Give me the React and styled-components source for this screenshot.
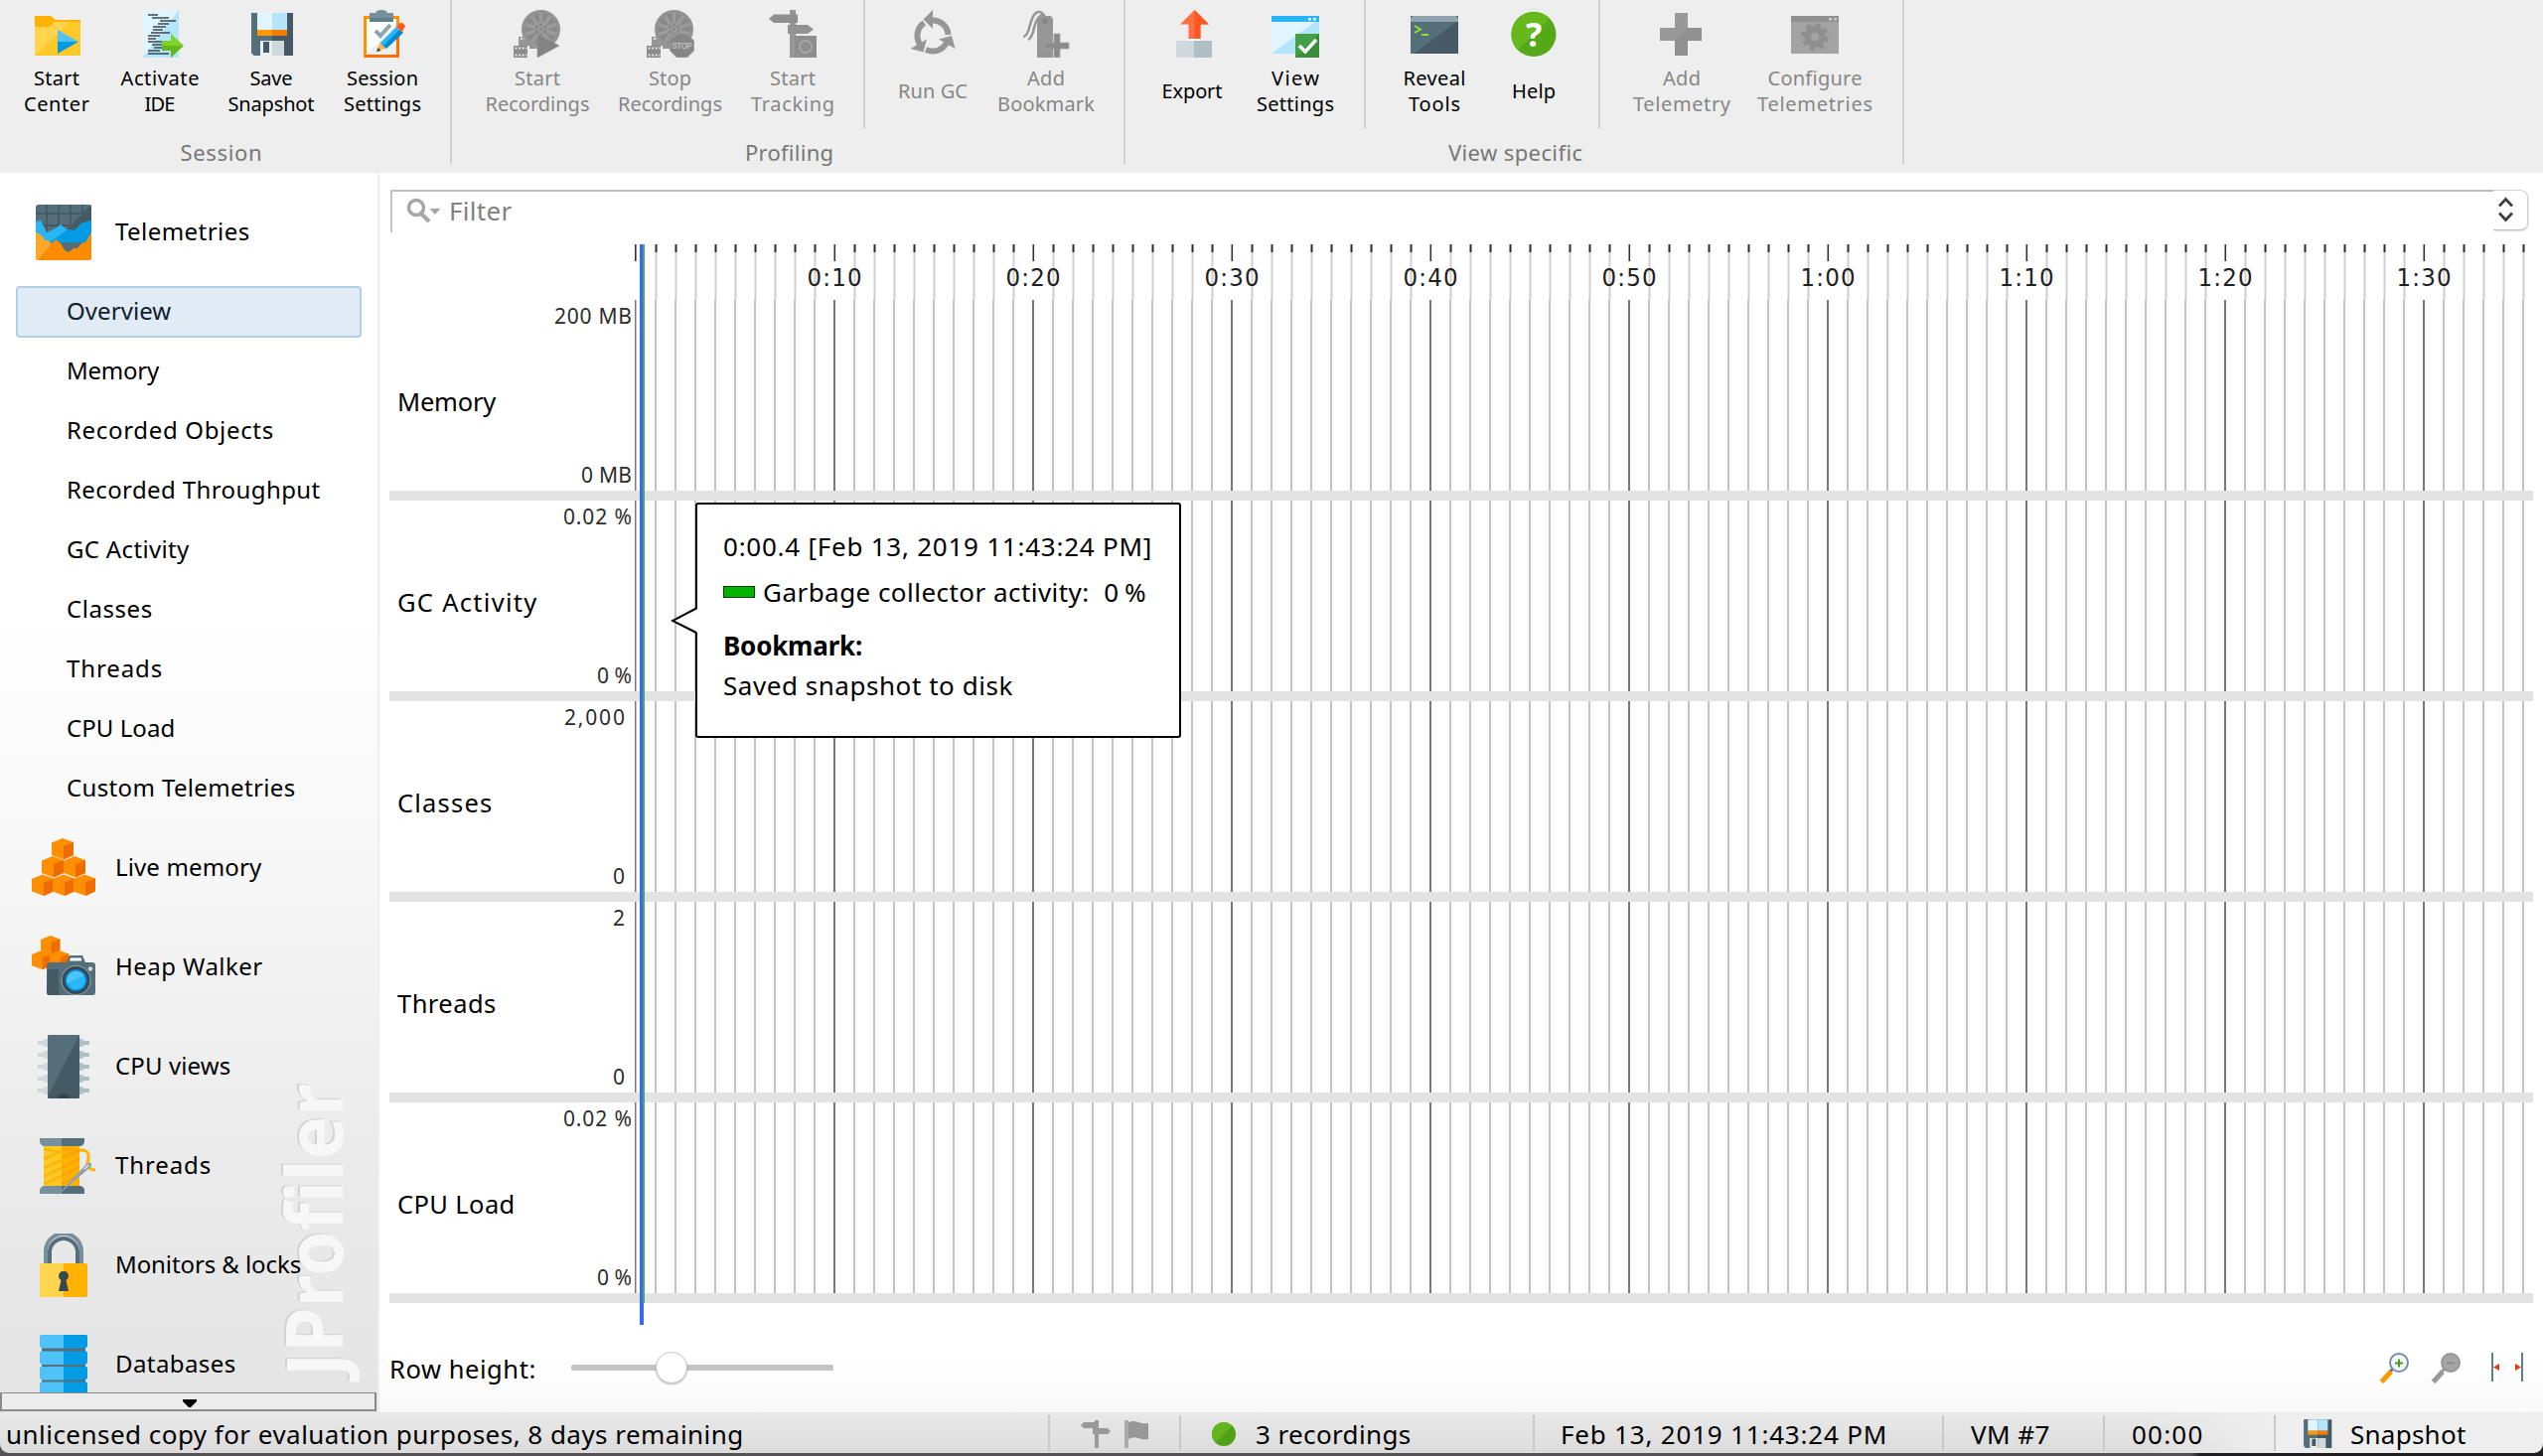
import React, { useLayoutEffect, useRef } from "react";
import styled, { createGlobalStyle } from "styled-components";

const Global = createGlobalStyle`
  * { box-sizing: border-box; }
  body { margin: 0; background: #fff; font-family: "Noto Sans", "Open Sans", sans-serif; color: #000; overflow: hidden; }
  svg { display: block; flex: none; }
`;

/* ---------- tracked text ---------- */
const TextSpan = styled.span`
  display: inline-block;
  white-space: pre;
  flex: none;
`;

/* Tunes letter spacing so that the text takes the given ink width. */
function T({ w, children }) {
  const ref = useRef(null);
  useLayoutEffect(() => {
    const el = ref.current;
    el.style.letterSpacing = "0px";
    el.style.marginRight = "0px";
    if (!w || children.length < 2) return;
    const size = parseFloat(getComputedStyle(el).fontSize);
    const natural = el.getBoundingClientRect().width;
    const ls = (w + size * 0.05 - natural) / (children.length - 1);
    el.style.letterSpacing = `${ls}px`;
    el.style.marginRight = `${-ls}px`;
  }, [w, children]);
  return <TextSpan ref={ref}>{children}</TextSpan>;
}

/* ---------- frame ---------- */
const Window = styled.div`
  width: 2560px;
  height: 1466px;
  display: flex;
  flex-direction: column;
  background: linear-gradient(90deg, #545254 2205px, #1f1f21 2215px);
`;
const Body = styled.div`
  height: 1248px;
  display: flex;
  background: #fff;
`;

/* ---------- toolbar ---------- */
const Toolbar = styled.div`
  height: 174px;
  flex: none;
  display: flex;
  background: #eee;
`;
const Section = styled.div`
  height: 165px;
  width: ${(p) => p.$w}px;
  border-right: 2px solid #d2d2d2;
  display: flex;
  flex-direction: column;
`;
const ToolRow = styled.div`
  height: 130px;
  display: flex;
`;
const ToolSet = styled.div`
  height: 130px;
  display: flex;
  padding-left: ${(p) => p.$l}px;
  padding-right: ${(p) => p.$r || 0}px;
  border-right: ${(p) => (p.$line ? "2px solid #d2d2d2" : "none")};
`;
const Tool = styled.div`
  width: ${(p) => p.$w}px;
  padding-top: 10px;
  display: flex;
  flex-direction: column;
  align-items: center;
  gap: 8px;
  color: ${(p) => (p.$off ? "#868686" : "#000")};
`;
const ToolLabel = styled.div`
  height: 52px;
  display: flex;
  flex-direction: column;
  align-items: center;
  justify-content: center;
  font-size: 20px;
  line-height: 26px;
`;
const Caption = styled.div`
  height: 35px;
  padding: 8px ${(p) => p.$r || 0}px 0 ${(p) => p.$l || 0}px;
  text-align: center;
  font-size: 22px;
  line-height: 30px;
  color: #777;
`;

/* ---------- sidebar ---------- */
const Sidebar = styled.div`
  position: relative;
  width: 382px;
  flex: none;
  height: 1248px;
  border-right: 2px solid #eee;
  background: linear-gradient(180deg, #fff 0, #fff 440px, #f7f7f7 700px, #ebebeb 980px, #e5e5e5 1228px);
  display: flex;
  flex-direction: column;
`;
const NavList = styled.div`
  position: relative;
  height: 1228px;
  flex: none;
  padding-top: 10px;
  overflow: hidden;
  display: flex;
  flex-direction: column;
`;
const Watermark = styled.svg`
  position: absolute;
  right: 0;
  bottom: 0;
`;
const NavGroup = styled.div`
  position: relative;
  height: 100px;
  flex: none;
  display: flex;
  align-items: center;
  gap: 20px;
  padding-left: 32px;
  font-size: 24px;
  line-height: 32px;
`;
const NavText = styled.div`
  padding-bottom: 3px;
`;
const NavItem = styled.div`
  height: 52px;
  flex: none;
  margin: 4px 16px;
  padding: 0 0 3px ${(p) => (p.$on ? 49 : 51)}px;
  display: flex;
  align-items: center;
  font-size: 24px;
  color: ${(p) => (p.$on ? "#10202e" : "#000")};
  background: ${(p) => (p.$on ? "#e1ebf5" : "transparent")};
  border: ${(p) => (p.$on ? "2px solid #b0cfe6" : "none")};
  border-radius: 4px;
`;
const ScrollDown = styled.div`
  height: 19px;
  width: 379px;
  border: 2px solid #8a8a8a;
  border-top-width: 1px;
  background: #ececec;
  display: flex;
  align-items: center;
  justify-content: center;
  padding: 3px 0 0 2px;
`;

/* ---------- main ---------- */
const Main = styled.div`
  flex: 1;
  height: 1248px;
  padding: 17px 10px 0 10px;
  display: flex;
  flex-direction: column;
  background: linear-gradient(180deg, #fff 0, #fff 1190px, #f9f9f9 1248px);
`;
const FilterBar = styled.div`
  height: 43px;
  margin: 0 5px 0 1px;
  display: flex;
  align-items: flex-start;
  justify-content: space-between;
  border-left: 2px solid #c3c3c3;
`;
const FilterField = styled.div`
  flex: 1;
  height: 43px;
  border-top: 2px solid #bdbdbd;
  display: flex;
  align-items: center;
  gap: 8px;
  padding: 0 0 4px 14px;
  font-size: 26px;
  color: #808080;
`;
const Stepper = styled.div`
  width: 35px;
  height: 41px;
  border: 1px solid #d4d4d4;
  border-left: none;
  border-bottom-color: #bbb;
  border-radius: 0 8px 8px 0;
  box-shadow: 1px 1px 1px rgba(0, 0, 0, 0.12);
  display: flex;
  align-items: center;
  padding: 0 0 2px 4px;
`;
const Chart = styled.div`
  position: relative;
  margin-top: 12px;
  display: flex;
  flex-direction: column;
`;
const RulerRow = styled.div`
  height: 56px;
  padding-left: 247px;
`;
const TelemetryRow = styled.div`
  height: 202px;
  display: flex;
  border-bottom: 10px solid #e3e3e3;
`;
const RowHead = styled.div`
  width: 247px;
  display: flex;
  justify-content: space-between;
  align-items: center;
  padding: 0 3px 0 8px;
`;
const RowName = styled.div`
  font-size: 25.5px;
  padding-top: 11px;
`;
const Scale = styled.div`
  height: 192px;
  display: flex;
  flex-direction: column;
  justify-content: space-between;
  align-items: flex-end;
  padding: 1px ${(p) => (p.$unit ? 0 : 7)}px 1px 0;
  font-size: 21px;
  line-height: 30px;
  color: #2c2c2c;
`;
const Cursor = styled.div`
  position: absolute;
  left: 252px;
  top: 0;
  width: 4px;
  height: 1088px;
  background: #3568fb;
`;
const CursorEdge = styled.div`
  position: absolute;
  left: 255px;
  top: 0;
  width: 2px;
  height: 1066px;
  background: #4fa660;
`;
const Tooltip = styled.div`
  position: absolute;
  left: 308px;
  top: 260px;
  width: 489px;
  height: 237px;
  border: 2px solid #000;
  border-radius: 3px;
  background: #fff;
  padding: 23px 0 0 26px;
  font-size: 26px;
  line-height: 38px;
`;
const Pointer = styled.svg`
  position: absolute;
  left: -27px;
  top: 103px;
`;
const TipLine = styled.div`
  height: 38px;
  margin-top: ${(p) => p.$mt || 0}px;
  display: flex;
  align-items: center;
  font-weight: ${(p) => (p.$bold ? 700 : 400)};
`;
const Swatch = styled.div`
  width: 32px;
  height: 12px;
  margin: 0 8px 0 0;
  background: #00b400;
  border: 1px solid #003c00;
`;
const TipValue = styled.div`
  margin-left: 15px;
`;
const Footer = styled.div`
  height: 66px;
  margin-top: 32px;
  padding-right: 10px;
  display: flex;
  align-items: center;
  font-size: 25.5px;
`;
const FooterLabel = styled.div`
  padding-top: 2px;
`;
const SliderTrack = styled.div`
  width: 264px;
  height: 6px;
  margin: 0 auto 0 36px;
  border-radius: 2px;
  background: #c4c4c4;
  display: flex;
  align-items: center;
  padding-left: 85px;
`;
const Thumb = styled.div`
  width: 32px;
  height: 32px;
  flex: none;
  border-radius: 50%;
  background: #fff;
  border: 1px solid #ccc;
  box-shadow: 0 1px 2px rgba(0, 0, 0, 0.28);
`;
const ZoomTools = styled.div`
  display: flex;
  align-items: center;
  gap: 22px;
`;
const FitTool = styled.div`
  margin-left: 9px;
`;

/* ---------- status bar ---------- */
const Status = styled.div`
  height: 41px;
  flex: none;
  padding: 3px 0 2px;
  display: flex;
  border-radius: 0 0 9px 9px;
  font-size: 26px;
  background:
    linear-gradient(90deg, rgba(238, 238, 238, 0) 2160px, #eee 2290px),
    linear-gradient(180deg, #e9e9e9, #dcdcdc);
`;
const Cell = styled.div`
  width: ${(p) => p.$w}px;
  height: 36px;
  display: flex;
  align-items: center;
  gap: ${(p) => p.$gap || 0}px;
  padding-left: ${(p) => p.$l}px;
  padding-top: 1px;
  border-right: ${(p) => (p.$last ? "none" : "2px solid #c9c9c9")};
`;

/* ---------- toolbar icons, 48 x 48 ---------- */
const I48 = ({ children }) => (
  <svg width="48" height="48" viewBox="0 0 48 48">{children}</svg>
);
const G = "#969696";

const FolderIcon = () => (
  <I48>
    <path d="M2 6h16l5 4h25v36H2z" fill="#ffb300" />
    <path d="M2 17h15l5-5h26v34H2z" fill="#ffca28" />
    <path d="M2 17h15l5-5h15L2 46z" fill="#ffd54f" />
    <path d="M25 20l21 12H25z" fill="#4fc3f7" />
    <path d="M25 32h21L25 44z" fill="#039be5" />
  </I48>
);
const IdeIcon = () => (
  <I48>
    <path d="M7 0h36v48H7z" fill="#b3e5fc" />
    <path d="M7 0h36L7 48z" fill="#e1f5fe" />
    <path d="M12 5h10M16 8h17M24 11h16M22 14h11M17 17h13M17 20h10M15 23h19M12 26h12M12 29h8M12 32h15M16 35h12M18 38h9M12 41h12M12 44h21" stroke="#37474f" strokeWidth="1.6" />
    <path d="M26 31h9v-7l13 12H26z" fill="#82d22d" />
    <path d="M26 36h22L35 48v-7h-9z" fill="#64b81a" />
  </I48>
);
const FloppyShape = () => (
  <>
    <path d="M4 3h42v43H7l-3-3z" fill="#455a64" />
    <path d="M4 3h21v43H7l-3-3z" fill="#546e7a" />
    <path d="M10 3h15v17H10z" fill="#e1f5fe" />
    <path d="M25 3h15v17H25z" fill="#b3e5fc" />
    <path d="M10 20h15v6H10z" fill="#ff9800" />
    <path d="M25 20h15v6H25z" fill="#f57c00" />
    <path d="M13 31h12v15H13z" fill="#eceff1" />
    <path d="M25 31h12v15H25z" fill="#cfd8dc" />
    <path d="M16 32h6v11h-6z" fill="#455a64" />
  </>
);
const SaveIcon = () => <I48><FloppyShape /></I48>;
const ClipboardIcon = () => (
  <I48>
    <path d="M5 6h36v42H5z" fill="#ff9100" />
    <path d="M5 48L41 18v30z" fill="#ff6d00" />
    <path d="M8 9h30v36H8z" fill="#fff" />
    <path d="M8 45L38 15v30z" fill="#eceff1" />
    <path d="M11 3h6q1-3 6-3t6 3h6v9H11z" fill="#78909c" />
    <path d="M11 8h24v4H11z" fill="#607d8b" />
    <path d="M17 21l5 5 10-11" fill="none" stroke="#90a4ae" strokeWidth="4" />
    <path d="M18 42l3-8L39 17l6 5-18 17z" fill="#ffb74d" />
    <path d="M22 33L38 17l4 4-17 16z" fill="#29b6f6" />
    <path d="M25 36L41 20l4 3-17 16z" fill="#0288d1" />
    <path d="M38 17l4-4q2-1 5 3l-3 6z" fill="#ff5722" />
    <path d="M18 42l1.500-4 3 3z" fill="#37474f" />
  </I48>
);
const Reel = () => (
  <>
    <circle cx="27.500" cy="19.500" r="19.500" fill="#929292" />
    <circle cx="27.500" cy="19.500" r="16" fill="#898989" />
    <path d="M27.500 3v33M12 14.500l31 10M12 24.500l31-10M18 33l19-27M37 33L18 6" stroke="#9b9b9b" strokeWidth="3.500" />
    <circle cx="27.500" cy="19.500" r="6.500" fill="#9b9b9b" />
    <g fill="#848484">
      <circle cx="27.500" cy="19.500" r="1.300" />
      <circle cx="27.500" cy="15" r="1.400" /><circle cx="31.500" cy="17.500" r="1.400" /><circle cx="31.500" cy="22" r="1.400" />
      <circle cx="27.500" cy="24.300" r="1.400" /><circle cx="23.500" cy="22" r="1.400" /><circle cx="23.500" cy="17.500" r="1.400" />
    </g>
    <path d="M5 27h5l14 9v3H16v-3H5z" fill={G} />
    <path d="M0 36h14v12H0z" fill="#8c8c8c" />
    <path d="M1.500 38.500h12M1.500 45.500h12M7 29h4" stroke="#e4e4e4" strokeWidth="2" strokeDasharray="2 1.600" />
  </>
);
const StartRecIcon = () => (
  <I48><Reel /><path d="M24 24l22 12-22 12z" fill="#838383" stroke="#9c9c9c" strokeWidth=".6" /></I48>
);
const StopText = styled.text`
  font: 700 8.500px "Liberation Sans", sans-serif;
  fill: #bdbdbd;
`;
const StopRecIcon = () => (
  <I48>
    <Reel />
    <path d="M30.500 24h10l7 7v10l-7 7h-10l-7-7V31z" fill="#868686" stroke="#9c9c9c" strokeWidth=".8" />
    <StopText x="25" y="39" textLength="21">STOP</StopText>
  </I48>
);
const TrackIcon = () => (
  <I48>
    <path d="M21 0h6v48h-6z" fill={G} />
    <path d="M5 4.500h24V13H5L0 9z" fill="#8f8f8f" />
    <path d="M19 15h20l6 4.500-6 4.500H19z" fill="#929292" />
    <path d="M26 26h22v22H26z" fill="#8e8e8e" />
    <circle cx="37" cy="37" r="6" fill="none" stroke="#a8a8a8" strokeWidth="1.800" />
  </I48>
);
const GcArc = ({ r }) => (
  <g transform={`rotate(${r} 24 26)`}>
    <path d="M23 10.500A15.500 15.500 0 0 1 39.500 25" fill="none" stroke={G} strokeWidth="6" />
    <path d="M24 0v19L14.500 9.500z" fill={G} />
  </g>
);
const GcIcon = () => <I48><GcArc r={0} /><GcArc r={120} /><GcArc r={240} /></I48>;
const BookmarkIcon = () => (
  <I48>
    <path d="M17 6h12l2 3v39H15V9z" fill={G} />
    <path d="M24 12Q22 1 16 2Q11 3 8 15T1 27M21 4Q14 8 12 18T6 30" fill="none" stroke={G} strokeWidth="2.500" />
    <circle cx="23" cy="11" r="3" fill="#858585" />
    <path d="M32 24h6v9h9v6h-9v9h-6v-9h-9v-6h9z" fill="#8b8b8b" stroke="#a5a5a5" strokeWidth=".8" />
  </I48>
);
const ExportIcon = () => (
  <I48>
    <path d="M26.500 0L41 14.500h-8.500V29h-12V14.500H12z" fill="#ff7043" />
    <path d="M26.500 0L41 14.500h-8.500V29h-6z" fill="#ff5722" />
    <path d="M8 31h18v17H8z" fill="#cfd8dc" />
    <path d="M26 31h18v17H26z" fill="#b0bec5" />
    <path d="M21 29h11v2H21z" fill="#fff" />
  </I48>
);
const ViewIcon = () => (
  <I48>
    <path d="M0 6h48v38H0z" fill="#b3e5fc" />
    <path d="M0 12h44L0 44z" fill="#e1f5fe" />
    <path d="M0 6h48v6H0z" fill="#29b6f6" />
    <path d="M37 8h3v2.500h-3zM42 8h3v2.500h-3z" fill="#fff" />
    <path d="M24 24h24v24H24z" fill="#388e3c" />
    <path d="M24 24h24L24 48z" fill="#43a047" />
    <path d="M28 36l6 6 11-12" fill="none" stroke="#fff" strokeWidth="3.500" />
  </I48>
);
const TerminalIcon = () => (
  <I48>
    <path d="M0 6h48v38H0z" fill="#455a64" />
    <path d="M0 12h46L4 44H0z" fill="#546e7a" />
    <path d="M2 6h44l2 2v4H0V8z" fill="#90a4ae" />
    <path d="M4 16l6 3.500-6 3.500M11 25h7" fill="none" stroke="#8be234" strokeWidth="2" />
  </I48>
);
const HelpText = styled.text`
  font: 700 34px "Noto Sans", sans-serif;
  fill: #fff;
`;
const HelpIcon = () => (
  <I48>
    <circle cx="24" cy="24.500" r="22.500" fill="#55a817" />
    <path d="M8 40.500A22.500 22.500 0 0 1 40 8.500z" fill="#66b91b" />
    <HelpText x="24" y="37" textAnchor="middle">?</HelpText>
  </I48>
);
const PlusIcon = () => (
  <I48>
    <path d="M17 3h13v15h14v13H30v15H17V31H2V18h15z" fill="#909090" />
    <path d="M17 3h13v15L17 31H2V18h15z" fill="#999" />
  </I48>
);
const ConfigIcon = () => (
  <I48>
    <path d="M0 6h48v38H0z" fill="#a3a3a3" />
    <path d="M0 6h48v6H0z" fill="#909090" />
    <path d="M38 8h3v2.500h-3zM43 8h3v2.500h-3z" fill="#ccc" />
    <circle cx="24" cy="27" r="7.500" fill="none" stroke="#8f8f8f" strokeWidth="6.500" />
    <circle cx="24" cy="27" r="11.500" fill="none" stroke="#8f8f8f" strokeWidth="4.500" strokeDasharray="4.800 4.230" />
  </I48>
);

/* ---------- sidebar icons, 64 x 64 ---------- */
const I64 = ({ children }) => (
  <svg width="64" height="64" viewBox="0 0 64 64">{children}</svg>
);
const Cube = ({ x, y, s = 1 }) => (
  <g transform={`translate(${x} ${y}) scale(${s})`}>
    <path d="M0 4.500l11-4.500 11 4v13l-10 4.500L0 17z" fill="#ff8f00" />
    <path d="M12 8l10-4v13l-10 4.500z" fill="#ef6c00" />
  </g>
);
const TelemetryIcon = () => (
  <I64>
    <rect x="4" y="4" width="56" height="56" rx="3" fill="#546e7a" />
    <path d="M60 4v28H32z" fill="#455a64" />
    <path d="M4 13h56M4 25h56M15 4v28M27 4v28M39 4v28M51 4v28" stroke="#455a64" strokeWidth="1.800" />
    <path d="M4 21l5-1 6 12 7-3 7-5 6 5 8 1 7-7 3-1 7-2v22H4z" fill="#29b6f6" />
    <path d="M36 29l7 1 7-7 3-1 7-2v22H18z" fill="#039be5" />
    <path d="M4 32l6 3 3 5h3l4 4 4-5 5 4 4 7 4 2 5-4 4 0 4-5 4-1 6-10v25q0 3-3 3H7q-3 0-3-3z" fill="#fb8c00" />
    <path d="M4 32l6 3 3 5h3l4 3 4-4L6 60q-2 0-2-3z" fill="#ffa726" />
  </I64>
);
const LiveMemoryIcon = () => (
  <I64>
    <Cube x={20} y={2} /><Cube x={10} y={20} /><Cube x={32} y={20} />
    <Cube x={0} y={38.5} /><Cube x={21} y={38.5} /><Cube x={42} y={38.5} />
  </I64>
);
const HeapIcon = () => (
  <I64>
    <Cube x={9} y={0} s={0.88} /><Cube x={0} y={15} s={0.9} /><Cube x={18} y={15} s={0.88} />
    <path d="M18 27h17l3-7h13l3 7h7q3 0 3 3v27q0 3-3 3H18q-3 0-3-3V31q0-4 3-4z" fill="#546e7a" />
    <path d="M16 34h11v26h-9q-3 0-3-3z" fill="#455a64" />
    <path d="M39 22.500h11v3H38z" fill="#fff" />
    <circle cx="44.500" cy="45" r="15" fill="#90a4ae" />
    <circle cx="44.500" cy="45" r="14" fill="#37474f" />
    <circle cx="44.500" cy="45" r="11" fill="#0288d1" />
    <circle cx="44.500" cy="45" r="9.500" fill="#29b6f6" />
    <path d="M35.500 48a9.500 9.500 0 0 1 17-8z" fill="#4fc3f7" />
    <circle cx="59" cy="33.500" r="2.200" fill="#cfd8dc" />
  </I64>
);
const CpuIcon = () => (
  <I64>
    {[8, 20, 32, 44, 56].map((y) => (
      <g key={y}>
        <path d={`M6 ${y - 2}h5l3-2h3v8h-3l-3-2H6z`} fill="#cfd8dc" />
        <path d={`M58 ${y - 2}h-5l-3-2h-3v8h3l3-2h5z`} fill="#b0bec5" />
      </g>
    ))}
    <rect x="16" y="0" width="32" height="64" rx="1.500" fill="#455a64" />
    <path d="M17 0h31L16 62V1z" fill="#546e7a" />
    <path d="M26 64q0-5 6-5t6 5z" fill="#37474f" />
  </I64>
);
const SpoolIcon = () => (
  <I64>
    <path d="M12 8h18v44H12z" fill="#ffca28" />
    <path d="M30 8h18v44H30z" fill="#ffb300" />
    <path d="M12 15l18 3M12 25l18-8M12 34l18-8M12 42l18-8M12 50l18-8" stroke="#ffb300" strokeWidth="2.200" />
    <path d="M30 14l18 3M30 23l18-6M30 34l18-9M30 42l18-9M30 50l18-9" stroke="#ffa000" strokeWidth="2.200" />
    <path d="M8 4h22v8H12q-4-1-4-5z" fill="#78909c" />
    <path d="M30 4h23v3q0 4-4 5H30z" fill="#546e7a" />
    <path d="M8 60h22v-8H12q-4 1-4 5z" fill="#78909c" />
    <path d="M30 60h23v-3q0-4-4-5H30z" fill="#546e7a" />
    <path d="M48 16q10-1 9 8t-1 8q3 4 8 4" fill="none" stroke="#ffb300" strokeWidth="3" />
    <path d="M24 63l30-32q3-3 6-2 1 3-3 6z" fill="#90a4ae" />
    <path d="M57 31l-4 4" stroke="#eceff1" strokeWidth="1.200" />
  </I64>
);
const LockIcon = () => (
  <I64>
    <path d="M14 32V18a18 18 0 0 1 36 0v14" fill="none" stroke="#78909c" strokeWidth="4" />
    <path d="M18 32V19a14 14 0 0 1 28 0v13" fill="none" stroke="#546e7a" strokeWidth="4" />
    <rect x="8" y="30" width="48" height="34" rx="1.500" fill="#ffb300" />
    <path d="M9 30h23v34H8V31z" fill="#ffd54f" />
    <path d="M29.500 47a5 5 0 1 1 5 0l2.500 11H27z" fill="#37474f" />
  </I64>
);
const DatabaseIcon = () => (
  <I64>
    <path d="M10 4h44v60H10z" fill="#546e7a" />
    {[2, 18.500, 34, 49.500].map((y) => (
      <g key={y}>
        <path d={`M9 ${y}h23v13.500H10l-2-2V${y + 1}z`} fill="#4fc3f7" />
        <path d={`M32 ${y}h23l1 1v10.500l-2 2H32z`} fill="#039be5" />
      </g>
    ))}
  </I64>
);

/* ---------- small icons ---------- */
const SearchIcon = () => (
  <svg width="35" height="28" viewBox="0 0 35 28">
    <circle cx="10" cy="11" r="7.500" fill="none" stroke="#a6a6a6" strokeWidth="3.500" />
    <path d="M15 17l8 8" stroke="#a6a6a6" strokeWidth="4" />
    <path d="M23.500 12h11L29 18z" fill="#a6a6a6" />
  </svg>
);
const StepIcon = () => (
  <svg width="17" height="26" viewBox="0 0 17 26">
    <path d="M2 9.500L8.500 2.500 15 9.500M2 16.500l6.500 7 6.500-7" fill="none" stroke="#3c3c3c" strokeWidth="2.600" />
  </svg>
);
const MagnifyIcon = ({ off }) => (
  <svg width="30" height="31" viewBox="0 0 30 31">
    <path d="M14 16l-3 3" stroke={off ? "#999" : "#607d8b"} strokeWidth="3" />
    <path d="M12 19L2.500 29.500" stroke={off ? "#999" : "#ff9800"} strokeWidth="5" />
    <circle cx="20" cy="10" r="9" fill={off ? "#a6a6a6" : "#f3f6f8"} stroke={off ? "#969696" : "#78909c"} strokeWidth="2" />
    <path d={off ? "M16 10.500h8" : "M16 10.500h8M20 6.500v8"} stroke={off ? "#8a8a8a" : "#4f9a20"} strokeWidth="2" />
  </svg>
);
const FitIcon = () => (
  <svg width="32" height="30" viewBox="0 0 32 30">
    <path d="M1 0v29M31 0v29" stroke="#607d8b" strokeWidth="2" />
    <path d="M2 14.500l6-3.500v7zM30 14.500l-6-3.500v7z" fill="#dd3c14" />
  </svg>
);
const SignIcon = () => (
  <svg width="30" height="28" viewBox="0 0 30 28">
    <path d="M14 0h4v28h-4z" fill="#999" />
    <path d="M3 2h15v6H3L0 5zM12 8h15l3 3-3 3H12z" fill="#999" />
  </svg>
);
const FlagIcon = () => (
  <svg width="24" height="28" viewBox="0 0 24 28">
    <path d="M0 0h4v28H0z" fill="#aaa" />
    <path d="M4 2q5-2 10 0t10 1v16q-5 1-10-1T4 19z" fill="#979797" />
  </svg>
);
const GreenDot = () => (
  <svg width="24" height="24" viewBox="0 0 24 24">
    <circle cx="12" cy="12" r="12" fill="#52a018" />
    <path d="M3.500 20.500a12 12 0 0 1 17-17z" fill="#66b41d" />
  </svg>
);

/* ---------- data ---------- */
const sections = [
  {
    w: 455, caption: "Session", cw: 81, r: 8,
    sets: [{ l: 6, tools: [
      [FolderIcon, 102, [["Start", 45], ["Center", 65]]],
      [IdeIcon, 106, [["Activate", 78], ["IDE", 30]]],
      [SaveIcon, 118, [["Save", 42], ["Snapshot", 86]]],
      [ClipboardIcon, 106, [["Session", 71], ["Settings", 77]]],
    ] }],
  },
  {
    w: 678, caption: "Profiling", cw: 88, l: 3,
    sets: [
      { l: 19, r: 14, line: true, tools: [
        [StartRecIcon, 134, [["Start", 45], ["Recordings", 104]], true],
        [StopRecIcon, 133, [["Stop", 42], ["Recordings", 104]], true],
        [TrackIcon, 114, [["Start", 45], ["Tracking", 83]], true],
      ] },
      { l: 19, tools: [
        [GcIcon, 98, [["Run GC", 69]], true],
        [BookmarkIcon, 130, [["Add", 37], ["Bookmark", 97]], true],
      ] },
    ],
  },
  {
    w: 784, caption: "View specific", cw: 134, l: 3,
    sets: [
      { l: 17, r: 15, line: true, tools: [
        [ExportIcon, 100, [["Export", 60]]],
        [ViewIcon, 108, [["View", 47], ["Settings", 77]]],
      ] },
      { l: 21, r: 13, line: true, tools: [
        [TerminalIcon, 96, [["Reveal", 62], ["Tools", 51]]],
        [HelpIcon, 104, [["Help", 43]]],
      ] },
      { l: 19, tools: [
        [PlusIcon, 126, [["Add", 37], ["Telemetry", 97]], true],
        [ConfigIcon, 142, [["Configure", 94], ["Telemetries", 115]], true],
      ] },
    ],
  },
];
const views = [
  ["Overview", 104], ["Memory", 92], ["Recorded Objects", 207], ["Recorded Throughput", 254],
  ["GC Activity", 122], ["Classes", 85], ["Threads", 95], ["CPU Load", 108], ["Custom Telemetries", 229],
];
const groups = [
  [LiveMemoryIcon, "Live memory", 146], [HeapIcon, "Heap Walker", 147], [CpuIcon, "CPU views", 115],
  [SpoolIcon, "Threads", 95], [LockIcon, "Monitors & locks", 186], [DatabaseIcon, "Databases", 120],
];
const rows = [
  ["Memory", 98, ["200 MB", 77], ["0 MB", 50], true],
  ["GC Activity", 139, ["0.02 %", 68], ["0 %", 34], true],
  ["Classes", 94, ["2,000", 60], ["0", 0], false],
  ["Threads", 98, ["2", 0], ["0", 0], false],
  ["CPU Load", 117, ["0.02 %", 68], ["0 %", 34], true],
];
const seconds = Array.from({ length: 96 }, (_, i) => i);
const clock = (s) => `${Math.floor(s / 60)}:${String(s % 60).padStart(2, "0")}`;

const RulerText = styled.text`
  font-family: "DejaVu Sans Condensed", "DejaVu Sans", sans-serif;
  font-stretch: condensed;
  font-size: 25.5px;
  fill: #222;
`;
const Ruler = () => (
  <svg width="1911" height="56" viewBox="0 0 1911 56">
    {seconds.map((s) => {
      const x = s * 20;
      return s % 10 === 0 ? (
        <rect key={s} x={x + (s ? 0.5 : 0)} y="0" width="1.6" height="17" fill="#333" />
      ) : (
        <g key={s}>
          <rect x={x + 0.5} y="7" width="2" height="49" fill="#d0d0d0" />
          <rect x={x + 0.5} y="0" width="2" height="8" fill="#2a2a2a" />
        </g>
      );
    })}
    {seconds.filter((s) => s && s % 10 === 0).map((s) => (
      <RulerText key={s} x={s * 20 - 26.5} y="42" textLength="55">{clock(s)}</RulerText>
    ))}
  </svg>
);
const Grid = () => (
  <svg width="1911" height="192" viewBox="0 0 1911 192">
    {seconds.map((s) => (
      <rect key={s} x={s * 20} y="0" width={s ? 2 : 1.5} height="192" fill={s % 10 ? "#c2c2c2" : "#7a7a7a"} />
    ))}
  </svg>
);

const WaterText = styled.text`
  font: 700 79px "Noto Sans", "Open Sans", sans-serif;
`;

export default function App() {
  return (
    <>
      <Global />
      <Window>
        <Toolbar>
          {sections.map((sec) => (
            <Section key={sec.caption} $w={sec.w}>
              <ToolRow>
                {sec.sets.map((set, i) => (
                  <ToolSet key={i} $l={set.l} $r={set.r} $line={set.line}>
                    {set.tools.map(([Icon, w, lines, off], j) => (
                      <Tool key={j} $w={w} $off={off}>
                        <Icon />
                        <ToolLabel>
                          {lines.map(([t, tw]) => <T key={t} w={tw}>{t}</T>)}
                        </ToolLabel>
                      </Tool>
                    ))}
                  </ToolSet>
                ))}
              </ToolRow>
              <Caption $l={sec.l} $r={sec.r}><T w={sec.cw}>{sec.caption}</T></Caption>
            </Section>
          ))}
        </Toolbar>

        <Body>
          <Sidebar>
            <NavList>
              <Watermark width="110" height="330" viewBox="0 0 110 330">
                <g transform="translate(75 324) rotate(-90)">
                  <WaterText x="11" y="-2" fill="#d3d3d3" textLength="295" lengthAdjust="spacingAndGlyphs">JProfiler</WaterText>
                  <WaterText x="10" y="0" fill="#f7f7f7" textLength="295" lengthAdjust="spacingAndGlyphs">JProfiler</WaterText>
                </g>
              </Watermark>
              <NavGroup><TelemetryIcon /><NavText><T w={134}>Telemetries</T></NavText></NavGroup>
              {views.map(([t, w], i) => (
                <NavItem key={t} $on={i === 0}><T w={w}>{t}</T></NavItem>
              ))}
              {groups.map(([Icon, t, w]) => (
                <NavGroup key={t}><Icon /><NavText><T w={w}>{t}</T></NavText></NavGroup>
              ))}
            </NavList>
            <ScrollDown>
              <svg width="14" height="8" viewBox="0 0 14 8"><path d="M0 0h14v2L8 8H6L0 2z" /></svg>
            </ScrollDown>
          </Sidebar>

          <Main>
            <FilterBar>
              <FilterField><SearchIcon /><T w={62}>Filter</T></FilterField>
              <Stepper><StepIcon /></Stepper>
            </FilterBar>
            <Chart>
              <RulerRow><Ruler /></RulerRow>
              {rows.map(([name, w, hi, lo, unit]) => (
                <TelemetryRow key={name}>
                  <RowHead>
                    <RowName><T w={w}>{name}</T></RowName>
                    <Scale $unit={unit}>
                      <T w={hi[1]}>{hi[0]}</T>
                      <T w={lo[1]}>{lo[0]}</T>
                    </Scale>
                  </RowHead>
                  <Grid />
                </TelemetryRow>
              ))}
              <Cursor />
              <CursorEdge />
              <Tooltip>
                <Pointer width="27" height="28" viewBox="0 0 27 28">
                  <path d="M27 2L1.500 14 27 26z" fill="#fff" />
                  <path d="M26 1.500L2 14l24 12" fill="none" stroke="#000" strokeWidth="2" />
                </Pointer>
                <TipLine><T w={430}>0:00.4 [Feb 13, 2019 11:43:24 PM]</T></TipLine>
                <TipLine $mt={8}>
                  <Swatch />
                  <T w={327}>Garbage collector activity:</T>
                  <TipValue><T w={41}>0 %</T></TipValue>
                </TipLine>
                <TipLine $mt={16} $bold><T w={139}>Bookmark:</T></TipLine>
                <TipLine $mt={2}><T w={290}>Saved snapshot to disk</T></TipLine>
              </Tooltip>
            </Chart>
            <Footer>
              <FooterLabel><T w={146}>Row height:</T></FooterLabel>
              <SliderTrack><Thumb /></SliderTrack>
              <ZoomTools>
                <MagnifyIcon />
                <MagnifyIcon off />
                <FitTool><FitIcon /></FitTool>
              </ZoomTools>
            </Footer>
          </Main>
        </Body>

        <Status>
          <Cell $w={1057} $l={6}><T w={741}>unlicensed copy for evaluation purposes, 8 days remaining</T></Cell>
          <Cell $w={132} $l={31} $gap={14}><SignIcon /><FlagIcon /></Cell>
          <Cell $w={356} $l={31} $gap={20}><GreenDot /><T w={155}>3 recordings</T></Cell>
          <Cell $w={412} $l={26}><T w={327}>Feb 13, 2019 11:43:24 PM</T></Cell>
          <Cell $w={162} $l={27}><T w={78}>VM #7</T></Cell>
          <Cell $w={172} $l={27}><T w={70}>00:00</T></Cell>
          <Cell $w={269} $l={27} $gap={16} $last>
            <svg width="32" height="32" viewBox="2 1 48 48"><FloppyShape /></svg>
            <T w={115}>Snapshot</T>
          </Cell>
        </Status>
      </Window>
    </>
  );
}
